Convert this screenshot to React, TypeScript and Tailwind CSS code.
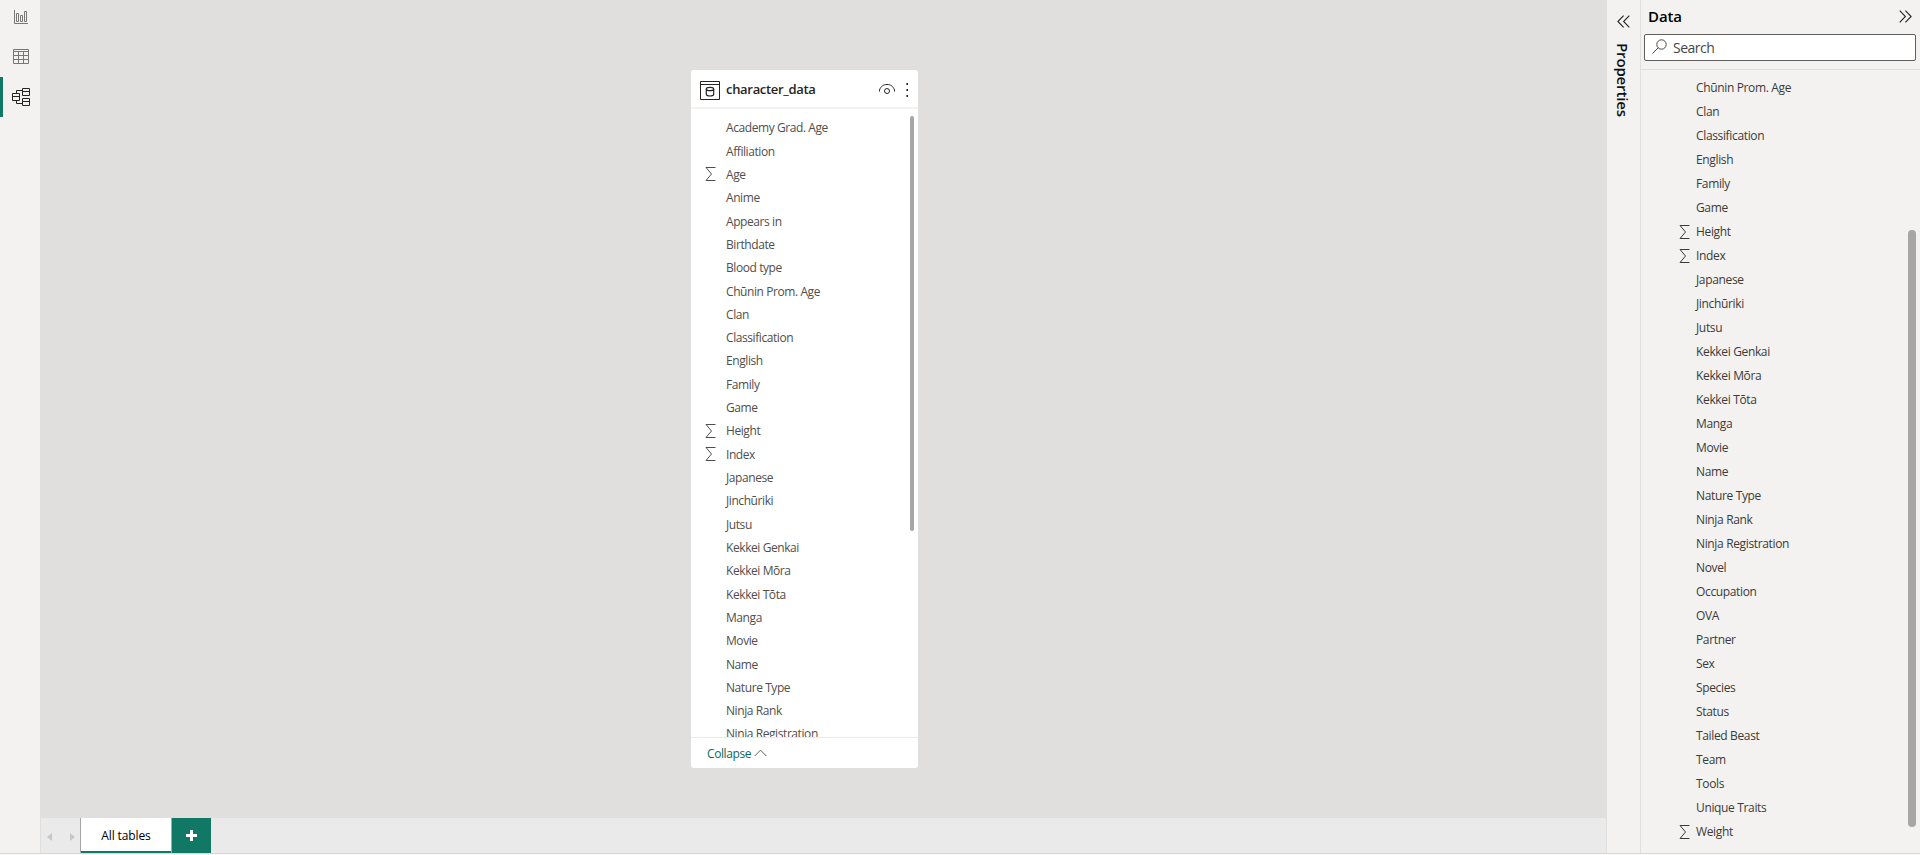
const modelFields = [
  'Academy Grad. Age', 'Affiliation', 'Age', 'Anime', 'Appears in', 'Birthdate', 'Blood type',
  'Chūnin Prom. Age', 'Clan', 'Classification', 'English', 'Family', 'Game', 'Height', 'Index',
  'Japanese', 'Jinchūriki', 'Jutsu', 'Kekkei Genkai', 'Kekkei Mōra', 'Kekkei Tōta', 'Manga',
  'Movie', 'Name', 'Nature Type', 'Ninja Rank', 'Ninja Registration',
];

const paneFields = [
  ...modelFields.slice(7), 'Novel', 'Occupation', 'OVA', 'Partner', 'Sex', 'Species', 'Status',
  'Tailed Beast', 'Team', 'Tools', 'Unique Traits', 'Weight',
];

const numericFields = new Set(['Age', 'Height', 'Index', 'Weight']);

function Sigma({ className }: { className: string }) {
  return (
    <svg width="11" height="14" viewBox="0 0 11 14" fill="none" stroke="currentColor" className={className}>
      <path d="M10.500 .5H1L6.500 7 1 13.500H10.500" />
    </svg>
  );
}

function Sidebar() {
  return (
    <nav className="flex w-10 shrink-0 flex-col bg-[#f3f2f1]">
      <button className="flex h-[37px] w-full items-start pl-[14px] pt-[10px]">
        <svg width="14" height="14" viewBox="0 0 14 14" fill="none" stroke="#797775">
          <path d="M.5 0v13.5H14" />
          <path d="M2.5 3.5h2v8h-2zM6.5 5.5h2v6h-2zM10.5 1.5h2v10h-2z" />
        </svg>
      </button>
      <button className="flex h-10 w-full items-start pl-[13px] pt-3">
        <svg width="16" height="15" viewBox="0 0 16 15" fill="none" stroke="#797775">
          <path d="M.5.5h15v14H.5zM.5 2.5h15M.5 6.5h15M.5 10.5h15M5.5 2.5v12M10.5 2.5v12" />
        </svg>
      </button>
      <button className="flex h-10 w-full items-center border-l-[3px] border-[#117865] pl-[9px]">
        <svg width="18" height="18" viewBox="0 0 18 18" fill="none" stroke="#252423">
          <path d="M.5 5.500h7v7h-7zM.5 8.500h7M10.500 .5h7v7h-7zM10.500 3.500h7M10.500 10.500h7v7h-7zM10.500 13.500h7M4.500 5.500v-3h6M4.500 12.500v3h6" />
        </svg>
      </button>
    </nav>
  );
}

function TableCard() {
  return (
    <section className="mt-[70px] ml-[651px] flex h-[698px] w-[227px] flex-col overflow-hidden rounded-[3px] bg-white">
      <header className="flex h-[39px] shrink-0 items-center border-b-2 border-[#f3f2f1] pl-[9px] pr-[9px]">
        <svg width="20" height="19" viewBox="0 0 20 19" fill="none" stroke="#252423" className="mt-[4px]">
          <path d="M.5.5h19v18H.5z" />
          <path d="M0 3.500h20" />
          <ellipse cx="10" cy="8" rx="3.700" ry="1.700" strokeWidth="1.200" />
          <path d="M6.300 8v5.300c0 1 1.700 1.700 3.700 1.700s3.700-.7 3.700-1.700V8" strokeWidth="1.200" />
        </svg>
        <h2 className="ml-[6px] w-[148px] whitespace-nowrap text-[13px] font-semibold leading-5 tracking-[-0.31px] text-[#252423]">
          character_data
        </h2>
        <svg width="18" height="12" viewBox="0 0 18 12" fill="none" stroke="#252423" className="ml-[4px] mt-[1px] shrink-0">
          <path d="M1.500 8.500V7C3 3 5.500 1.500 9 1.500S15 3 16.500 7v1.500" />
          <circle cx="9" cy="8" r="2.500" />
        </svg>
        <svg width="3" height="14" viewBox="0 0 3 14" fill="#252423" className="ml-[10px] mt-[2px] shrink-0">
          <path d="M.4 0H2v2H.4zM.4 6H2v2H.4zM.4 12H2v2H.4z" />
        </svg>
      </header>
      <div className="flex h-[628px] shrink-0 justify-between overflow-hidden pr-1 pt-[7px]">
        <ul className="pt-[0.7px]">
          {modelFields.map((f) => (
            <li key={f} className="flex h-[23.32px] items-center pl-[14px] text-[#504e4c]">
              <span className="w-[21px] shrink-0">{numericFields.has(f) && <Sigma className="-mt-px" />}</span>
              <span className="whitespace-nowrap text-[12px] leading-4 tracking-[-0.42px]">{f}</span>
            </li>
          ))}
        </ul>
        <div className="h-[415px] w-1 rounded-full bg-[#a6a6a6]" />
      </div>
      <footer className="flex flex-1 items-center border-t border-[#edebe9] pl-4 pt-[2px] text-[12px] tracking-[-0.4px] text-[#0c695a]">
        <span>Collapse</span>
        <svg width="13" height="8" viewBox="0 0 13 8" fill="none" stroke="#605e5c" className="ml-[3px] -mt-[2px]">
          <path d="M.7 7 6.500 1.200 12.300 7" />
        </svg>
      </footer>
    </section>
  );
}

function TabBar() {
  return (
    <div className="flex h-[35px] shrink-0 border-x border-[#e1dfdd] bg-[#eaeaea]">
      <div className="flex w-[39px] items-center justify-between pl-[6px] pr-[5px] pt-[2px]">
        <svg width="5" height="8" viewBox="0 0 5 8" fill="#c8c6c4"><path d="M5 0v8L0 4z" /></svg>
        <svg width="5" height="8" viewBox="0 0 5 8" fill="#c8c6c4"><path d="M0 0v8l5-4z" /></svg>
      </div>
      <button className="flex w-[92px] items-center justify-center border-x border-[#a6a6a6] bg-white pt-px text-[12px] font-medium tracking-[-0.12px] text-black shadow-[inset_0_-2px_0_#117865]">
        All tables
      </button>
      <button className="flex w-[39px] items-center justify-center bg-[#117865]">
        <svg width="11" height="11" viewBox="0 0 11 11" fill="white"><path d="M4 0h3v4h4v3H7v4H4V7H0V4h4z" /></svg>
      </button>
    </div>
  );
}

function Chevrons({ left = false }: { left?: boolean }) {
  return (
    <svg width="13" height="13" viewBox="0 0 13 13" fill="none" stroke="#252423" strokeWidth="1.100" className={left ? 'rotate-180' : ''}>
      <path d="M.7.7 6.400 6.500.7 12.300M6.400.7l5.700 5.800-5.700 5.800" />
    </svg>
  );
}

function PropertiesRail() {
  return (
    <aside className="flex w-[33px] shrink-0 flex-col items-center bg-[#f3f2f1] pt-[15px]">
      <Chevrons left />
      <span className="mr-[2px] mt-[15px] whitespace-nowrap text-[15px] font-semibold leading-5 tracking-[-0.15px] text-[#111] [writing-mode:vertical-rl]">
        Properties
      </span>
    </aside>
  );
}

function DataPane() {
  return (
    <aside className="flex w-[280px] shrink-0 flex-col border-l border-[#e1dfdd] bg-[#f3f2f1]">
      <header className="flex h-[34px] shrink-0 items-center justify-between pb-[2px] pl-[7px] pr-[8px]">
        <h1 className="text-[15px] font-semibold tracking-[-0.1px] text-black">Data</h1>
        <Chevrons />
      </header>
      <div className="ml-[3px] flex h-[27px] w-[272px] shrink-0 items-center rounded-[2px] border border-[#605e5c] bg-white pl-[7px]">
        <svg width="15" height="15" viewBox="0 0 15 15" fill="none" stroke="#484644" className="-mt-[2px]">
          <circle cx="9.500" cy="5.500" r="4.700" />
          <path d="M6.200 8.800.5 14.500" />
        </svg>
        <span className="ml-[6px] text-[14px] leading-5 tracking-[-0.5px] text-[#484644]">Search</span>
      </div>
      <div className="mt-2 flex flex-1 justify-between border-t border-[#e1dfdd] pr-1 pt-[6px]">
        <ul>
          {paneFields.map((f) => (
            <li key={f} className="flex h-6 items-center pl-[38px] text-[#3b3a39]">
              <span className="w-[17px] shrink-0">{numericFields.has(f) && <Sigma className="" />}</span>
              <span className="whitespace-nowrap text-[12px] leading-4 tracking-[-0.35px]">{f}</span>
            </li>
          ))}
        </ul>
        <div className="mt-[154px] h-[597px] w-2 rounded-full bg-[#a6a6a6]" />
      </div>
    </aside>
  );
}

export default function App() {
  return (
    <div className="flex h-[855px] w-[1920px] flex-col overflow-hidden bg-[#faf9f8] font-['Open_Sans','Noto_Sans',sans-serif]">
      <div className="flex h-[853px] shrink-0 shadow-[0_1px_0_#d9d8d6]">
        <Sidebar />
        <main className="flex w-[1567px] shrink-0 flex-col bg-[#e0dfdd]">
          <div className="flex h-[818px] shrink-0">
            <TableCard />
          </div>
          <TabBar />
        </main>
        <PropertiesRail />
        <DataPane />
      </div>
    </div>
  );
}
